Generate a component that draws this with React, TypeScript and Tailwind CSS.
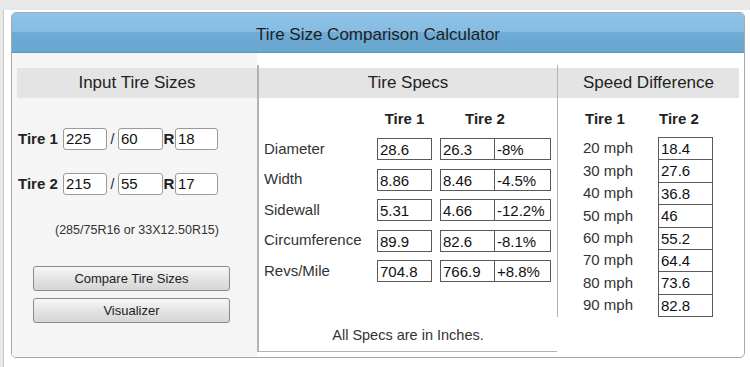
import React from 'react';

const specRows = [
  { label: 'Diameter', t1: '28.6', t2: '26.3', diff: '-8%' },
  { label: 'Width', t1: '8.86', t2: '8.46', diff: '-4.5%' },
  { label: 'Sidewall', t1: '5.31', t2: '4.66', diff: '-12.2%' },
  { label: 'Circumference', t1: '89.9', t2: '82.6', diff: '-8.1%' },
  { label: 'Revs/Mile', t1: '704.8', t2: '766.9', diff: '+8.8%' },
];

const speedRows = [
  { mph: '20 mph', t2: '18.4' },
  { mph: '30 mph', t2: '27.6' },
  { mph: '40 mph', t2: '36.8' },
  { mph: '50 mph', t2: '46' },
  { mph: '60 mph', t2: '55.2' },
  { mph: '70 mph', t2: '64.4' },
  { mph: '80 mph', t2: '73.6' },
  { mph: '90 mph', t2: '82.8' },
];

function SizeInput({ value, width }: { value: string; width: string }) {
  return (
    <div className={`${width} h-[22px] bg-white border border-[#9a9a9a] rounded-[3px] pl-[2px] text-[15px] leading-[20px] text-[#111]`}>
      {value}
    </div>
  );
}

function TireRow({ label, a, b, c }: { label: string; a: string; b: string; c: string }) {
  return (
    <div className="flex items-center h-[22px]">
      <span className="w-[45px] text-[15px] font-bold text-[#222]">{label}</span>
      <SizeInput value={a} width="w-[44px]" />
      <span className="w-[11px] text-center text-[14px] text-[#222]">/</span>
      <SizeInput value={b} width="w-[45px]" />
      <span className="w-[12px] text-center text-[15px] font-bold text-[#222]">R</span>
      <SizeInput value={c} width="w-[43px]" />
    </div>
  );
}

function ValueBox({ value, className }: { value: string; className: string }) {
  return (
    <div className={`${className} bg-white border border-[#5a5a5a] pl-[2px] text-[15px] text-[#111]`}>{value}</div>
  );
}

function ColumnHeader({ title }: { title: string }) {
  return (
    <div className="h-[30px] bg-[#e4e4e4] flex items-center justify-center text-[17px] text-[#222]">{title}</div>
  );
}

export default function App() {
  return (
    <div className="w-[750px] h-[367px] bg-[#e8e8e8] pt-[10px] font-['Liberation_Sans',Arial,sans-serif] overflow-hidden">
      <div className="h-[357px] bg-white ml-[3px] border-l border-[#c6c6c6] pt-[2px] pl-[7px]">
        <div className="w-[734px] h-[346px] border border-[#a8a8a8] rounded-[5px] bg-white flex flex-col">
          <div className="h-[40px] shrink-0 pt-[4px] rounded-t-[4px] border-b border-[#5f94bb] bg-[linear-gradient(to_bottom,#8fc3e8_0%,#86bce3_50%,#6eabd5_50%,#69a7d1_100%)] flex items-center justify-center text-[17px] text-[#1e1e1e]">
            Tire Size Comparison Calculator
          </div>

          <div className="flex flex-1 items-stretch">
            {/* input column */}
            <div className="w-[245px] bg-[#f5f5f5] pl-[5px] pt-[15px] rounded-bl-[4px]">
              <ColumnHeader title="Input Tire Sizes" />
              <div className="mt-[30px] pl-[1px]">
                <TireRow label="Tire 1" a="225" b="60" c="18" />
              </div>
              <div className="mt-[23px] pl-[1px]">
                <TireRow label="Tire 2" a="215" b="55" c="17" />
              </div>
              <p className="mt-[27px] text-center text-[12.5px] leading-[16px] text-[#333]">(285/75R16 or 33X12.50R15)</p>
              <div className="mt-[28px] ml-[16px] w-[197px] flex flex-col gap-[7px]">
                <button className="h-[25px] rounded-[3px] border border-[#8a8a8a] bg-[linear-gradient(to_bottom,#f8f8f8,#e4e4e4_50%,#d6d6d6)] text-[13px] text-[#222]">
                  Compare Tire Sizes
                </button>
                <button className="h-[25px] rounded-[3px] border border-[#8a8a8a] bg-[linear-gradient(to_bottom,#f8f8f8,#e4e4e4_50%,#d6d6d6)] text-[13px] text-[#222]">
                  Visualizer
                </button>
              </div>
            </div>

            {/* specs column */}
            <div className="mt-[12px] mb-[5px] w-[300px] border-l-2 border-b border-[#b3b3b3] bg-white pt-[3px] flex flex-col">
              <ColumnHeader title="Tire Specs" />
              <div className="mt-[12px] flex h-[18px] items-center text-[15px] font-bold text-[#222]">
                <span className="w-[118px]" />
                <span className="w-[55px] text-center">Tire 1</span>
                <span className="ml-[33px]">Tire 2</span>
              </div>
              <div className="mt-[10px] flex flex-col gap-[8.5px] pl-[5px]">
                {specRows.map((r) => (
                  <div key={r.label} className="flex items-center h-[22px]">
                    <span className="w-[113px] text-[15px] text-[#333]">{r.label}</span>
                    <ValueBox value={r.t1} className="w-[55px] h-[22px]" />
                    <ValueBox value={r.t2} className="ml-[8px] w-[55px] h-[22px]" />
                    <ValueBox value={r.diff} className="-ml-px w-[57px] h-[22px]" />
                  </div>
                ))}
              </div>
              <p className="mt-[44px] text-center text-[14.5px] leading-[18px] text-[#333]">All Specs are in Inches.</p>
            </div>

            {/* speed column */}
            <div className="mt-[12px] self-start w-[182px] border-l border-[#b3b3b3] bg-white pt-[3px]">
              <ColumnHeader title="Speed Difference" />
              <div className="mt-[12px] flex h-[18px] items-center text-[15px] font-bold text-[#222] pl-[27px]">
                <span className="w-[74px]">Tire 1</span>
                <span>Tire 2</span>
              </div>
              <div className="mt-[9px] pl-[25px] flex flex-col">
                {speedRows.map((r, i) => (
                  <div key={r.mph} className={`flex items-center ${i > 0 ? '-mt-px' : ''}`}>
                    <span className="w-[75px] text-[15px] text-[#333]">{r.mph}</span>
                    <ValueBox value={r.t2} className="w-[55px] h-[23.4px] leading-[21px]" />
                  </div>
                ))}
              </div>
            </div>
          </div>
        </div>
      </div>
    </div>
  );
}
